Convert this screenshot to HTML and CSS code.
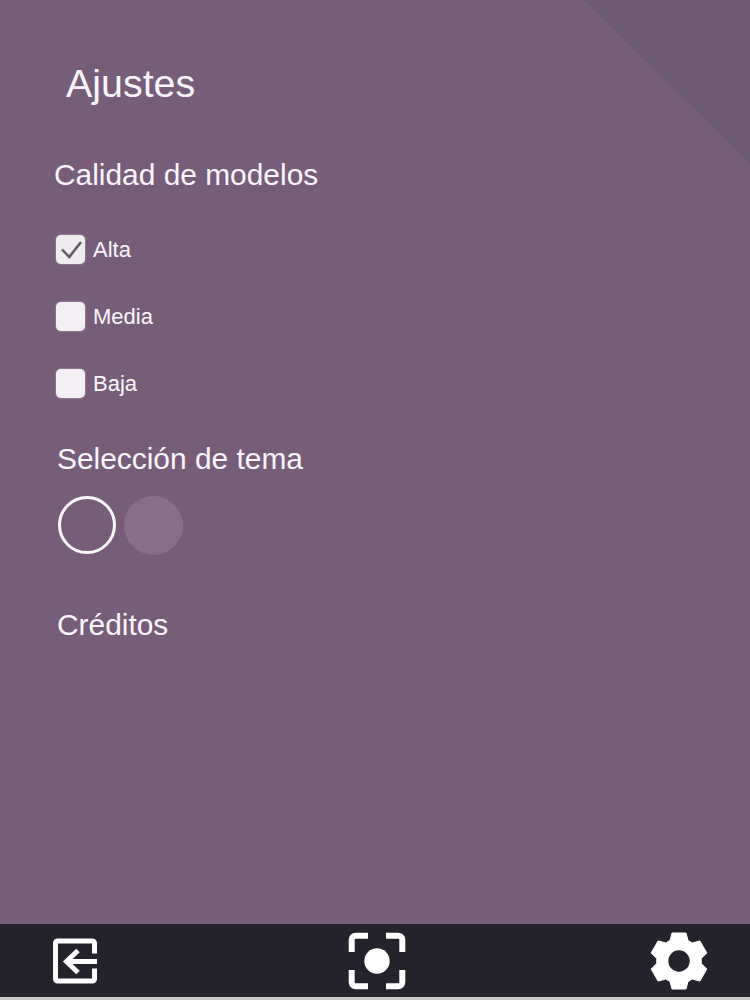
FILE: index.html
```html
<!DOCTYPE html>
<html lang="es">
<head>
<meta charset="utf-8">
<title>Ajustes</title>
<link rel="stylesheet" href="styles.css">
</head>
<body>
<div class="screen">
  <svg class="corner" width="166" height="164" viewBox="0 0 166 164"><polygon points="0,0 166,0 166,164"/></svg>
  <main class="content">
    <h1 class="title">Ajustes</h1>
    <h2 class="heading quality">Calidad de modelos</h2>
    <ul class="options">
      <li class="option">
        <span class="box checked"><svg width="29" height="29" viewBox="0 0 29 29"><path class="tick" d="M6 14.500 L13.300 22 L25 7"/></svg></span>
        <span class="label">Alta</span>
      </li>
      <li class="option"><span class="box"></span><span class="label">Media</span></li>
      <li class="option"><span class="box"></span><span class="label">Baja</span></li>
    </ul>
    <h2 class="heading theme">Selección de tema</h2>
    <div class="swatches">
      <span class="swatch selected"></span>
      <span class="swatch other"></span>
    </div>
    <h2 class="heading credits">Créditos</h2>
  </main>
  <nav class="bar">
    <svg class="icon" width="48" height="48" viewBox="0 0 48 48">
      <path class="line" d="M43.500 16.500 V6 a2 2 0 0 0 -2 -2 H6.500 a2 2 0 0 0 -2 2 V42 a2 2 0 0 0 2 2 H41.500 a2 2 0 0 0 2 -2 V31.500"/>
      <path class="line" d="M46 24.500 H16 M27 13.500 L15.500 24.500 L27 35.500"/>
    </svg>
    <svg class="icon focus" width="60" height="60" viewBox="0 0 60 60">
      <path class="line thick" d="M4.700 21 V8.700 a4 4 0 0 1 4 -4 H21 M39 4.700 H51.300 a4 4 0 0 1 4 4 V21 M4.700 39 V51.300 a4 4 0 0 0 4 4 H21 M39 55.300 H51.300 a4 4 0 0 0 4 -4 V39"/>
      <circle class="fill" cx="30" cy="30" r="12.700"/>
    </svg>
    <svg class="icon" width="60" height="60" viewBox="-30 -30 60 60">
      <polygon class="fill gear" points="-9,-20.500 -7,-28 7,-28 9,-20.500 13.250,-18.040 20.900,-20.100 27.800,-8.100 22.250,-2.460 22.250,2.450 27.800,8.100 20.900,20.100 13.250,18.040 9,20.500 7,28 -7,28 -9,20.500 -13.250,18.040 -20.900,20.100 -27.800,8.100 -22.250,2.460 -22.250,-2.450 -27.800,-8.100 -20.900,-20.100 -13.250,-18.040"/>
      <circle class="hole" r="10.700"/>
    </svg>
  </nav>
  <div class="strip"></div>
</div>
</body>
</html>
```
FILE: styles.css
```css
* { box-sizing: border-box; }
html, body { margin: 0; padding: 0; }
body { width: 750px; height: 1000px; overflow: hidden; font-family: "Liberation Sans", Arial, sans-serif; color: #fbf6fb; }
.screen { position: relative; width: 750px; height: 1000px; display: flex; flex-direction: column; background: #785d7b; }
.corner { position: absolute; top: 0; right: 0; }
.corner polygon { fill: #6c5974; }
.content { flex: 1; display: flex; flex-direction: column; align-items: flex-start; position: relative; }
.title { margin: 62px 0 0 66px; font-size: 39.400px; line-height: 42px; font-weight: 400; }
.heading { font-size: 29.900px; line-height: 34px; font-weight: 400; margin: 0; }
.quality { margin: 54px 0 0 54px; }
.options { list-style: none; margin: 43px 0 0 56px; padding: 0; display: flex; flex-direction: column; gap: 38px; }
.option { display: flex; align-items: center; gap: 8px; height: 29px; }
.box { width: 29px; height: 29px; border-radius: 5px; background: #f4eff5; display: flex; align-items: center; justify-content: center; box-shadow: 0 0 2px rgba(245, 239, 245, 0.6); }
.checked { background: #efebef; }
.label { font-size: 22px; line-height: 26px; }
.tick { fill: none; stroke: #5f5a62; stroke-width: 2.500; }
.theme { margin: 44px 0 0 57px; }
.swatches { display: flex; gap: 8px; margin: 20px 0 0 58px; }
.swatch { width: 58px; height: 58px; border-radius: 50%; }
.selected { border: 3px solid #fbf6fb; }
.other { width: 59px; height: 59px; background: #886e8b; }
.credits { margin: 53px 0 0 57px; }
.bar { height: 73px; background: #24222a; display: flex; align-items: center; justify-content: space-between; padding: 1px 41px 0 51px; }
.icon { display: block; }
.focus { margin-left: 5px; }
.line { fill: none; stroke: #fff; stroke-width: 5; }
.thick { stroke-width: 6; }
.fill { fill: #fff; }
.gear { stroke: #fff; stroke-width: 1; stroke-linejoin: round; }
.hole { fill: #24222a; }
.strip { height: 3px; background: #c9c8c6; }
```
